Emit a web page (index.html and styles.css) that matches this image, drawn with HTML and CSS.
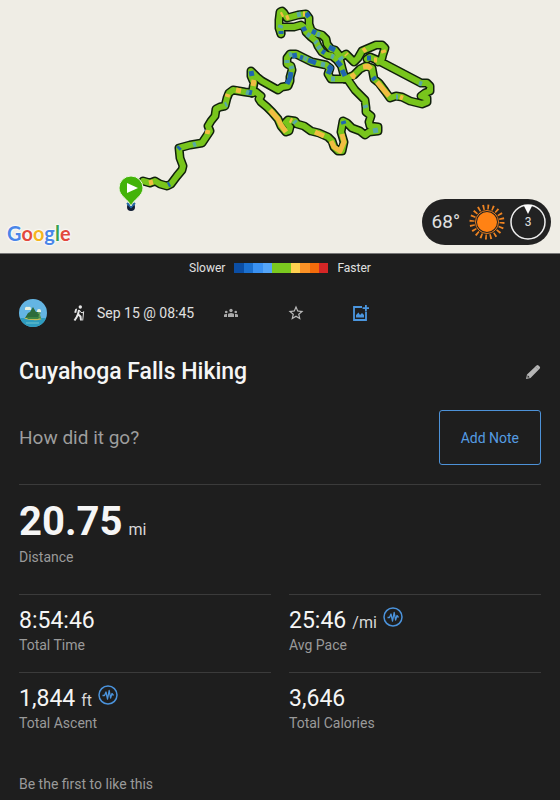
FILE: index.html
```html
<!DOCTYPE html>
<html lang="en">
<head>
    <meta charset="UTF-8">
    <meta name="viewport" content="width=device-width, initial-scale=1.0">
    <title>Cuyahoga Falls Hiking</title>
    <link rel="stylesheet" href="styles.css">
</head>
<body>
    <div class="map">
        <svg class="map-canvas" viewBox="0 0 560 253" role="img" aria-label="Route map">
            <defs>
                <g id="route">
                    <path d="M143 181L150 183L155 181L160 184L167 186L171 184L177 176L182 170L183 166L180 158L179 148L190 145L202 143L206 137L210 131L208 126L211 121L215 116L216 109L220 107L225 106L227 98L229 93L233 90L245 92L252 93"/>
                    <path d="M252 93L254 83L251 76L251 71L257 77L262 81L278 90L282 87L288 86L290 81L290 77L292 70L291 66L287 64L287 58L290 54L296 54L302 57L312 62L326 65L330 68L328 74L331 79L345 79"/>
                    <path d="M345 79L354 75L360 69L366 66L372 68L374 79L379 83L385 91L390 98L396 96L402 97L410 101L422 104L427 102L427 98L421 96L425 93L430 91L430 86L427 83L421 83L381 62L383 54L385 48L382 45L376 45L362 51L358 58L354 62L350 58L346 54L341 57L338 60"/>
                    <path d="M367 59L370 57L377 60L378 62"/>
                    <path d="M281 34L279 28L279 20L280 12L282 11L284 13L287 18L298 15L306 14L309 18L309 24L311 30L315 33L322 35L326 39L327 44L331 49L335 50L339 55L340 60L342 68L345 79"/>
                    <path d="M281 33L281 27L294 27L301 25L305 28L306 32L311 37L316 41L318 46L322 52L327 55L332 56L337 60L340 64"/>
                    <path d="M252 93L256 92L261 96L259 99L261 102L267 107L272 112L278 119L281 126L286 132L289 131L290 127L286 122L288 120L295 121L297 124L304 126L311 131L319 133L328 137L332 141L334 147L338 151L342 151L344 142L341 132L343 121L347 123L352 128L360 131L365 135L369 132L378 131L378 127L370 126L369 122L371 116L366 112L366 108L365 100L355 90L348 80"/>
                </g>
            </defs>
            <use href="#route" class="route route-outline"/>
            <use href="#route" class="route route-line"/>
            <g class="route pace-slow">
                <path d="M178 149L180 147M168 185L170 184M206 132L207 131M248 92L252 93M251 71L252 76M287 84L290 78L291 72M292 56L297 55M300 57L303 58M308 60L316 63M328 66L331 68L328 74M337 61L341 66M342 70L345 76M281 34L281 31M306 13L309 17M303 27L305 31M312 31L316 33M329 47L335 50M322 51L325 53M367 58L371 58M373 77L375 80M343 121L344 124"/>
            </g>
            <g class="route pace-mid">
                <path d="M193 145L196 144M225 105L227 104M246 92L249 93M280 28L281 25M297 15L301 14M289 55L292 54M291 66L292 69M304 58L307 59M321 64L325 65M331 79L335 79M317 34L320 35M307 34L310 36M315 41L317 43M331 56L334 57M318 46L320 49M340 57L342 60M365 105L366 108M373 131L378 130M294 121L296 123M396 97L398 97M419 83L422 84M287 60L287 63"/>
            </g>
            <g class="route pace-fast">
                <path d="M149 183L153 182M227 97L228 94M236 90L241 91M254 80L253 86M208 130L207 134M286 18L289 17M303 14L305 14M363 67L368 66L371 69M351 77L355 74M377 82L389 96M374 60L377 60M270 110L278 119L281 125L286 132M290 120L292 121M315 132L324 136M331 141L334 147L340 151L344 142L342 134M352 78L354 76M281 15L283 14M346 54L347 55M363 51L366 49M383 50L384 53M400 97L403 98"/>
            </g>
            <circle cx="131" cy="207" r="4" fill="#111d33"/>
            <path d="M127 203l4 4 4-4" fill="none" stroke="#2368a8" stroke-width="2"/>
            <path d="M131 206C128 199 119 196 119 188A12 12 0 0 1 143 188C143 196 134 199 131 206Z" fill="#43b309" stroke="#e9f4dc" stroke-width="1"/>
            <path d="M127 183L138 188L127 193Z" fill="#fff"/>
        </svg>
        <div class="google-logo" aria-label="Google"><span class="g-blue">G</span><span class="g-red">o</span><span class="g-yellow">o</span><span class="g-blue">g</span><span class="g-green">l</span><span class="g-red">e</span></div>
        <div class="weather">
            <span class="temperature">68°</span>
            <svg class="weather-icon" viewBox="0 0 36 36" aria-hidden="true">
                <circle cx="18" cy="18" r="15" fill="none" stroke="#ef8422" stroke-width="5" stroke-dasharray="1.7 3.01"/>
                <circle cx="18" cy="18" r="11.5" fill="#222" stroke="#e87c1e" stroke-width="1"/>
                <circle cx="18" cy="18" r="10" fill="#ff8214"/>
            </svg>
            <div class="wind">
                <svg class="wind-dial" viewBox="0 0 36 36" aria-hidden="true">
                    <circle cx="18" cy="18" r="17" fill="none" stroke="#eee" stroke-width="1.5"/>
                    <path d="M13.5 1H22.5L18 10Z" fill="#fff"/>
                </svg>
                <span class="wind-speed">3</span>
            </div>
        </div>
    </div>

    <div class="legend">
        <span>Slower</span>
        <div class="legend-bar">
            <i class="step-1"></i><i class="step-2"></i><i class="step-3"></i><i class="step-4"></i><i class="step-5"></i><i class="step-5"></i><i class="step-6"></i><i class="step-7"></i><i class="step-8"></i><i class="step-9"></i>
        </div>
        <span>Faster</span>
    </div>

    <main class="activity">
        <div class="meta">
            <svg class="avatar" viewBox="0 0 28 28" role="img" aria-label="Profile">
                <clipPath id="avatar-clip"><circle cx="14" cy="14" r="14"/></clipPath>
                <g clip-path="url(#avatar-clip)">
                    <path d="M0 0H28V28H0Z" fill="#64b5e3"/>
                    <path d="M0 19H28V28H0Z" fill="#2e9cbf"/>
                    <path d="M6 10a2 2 0 0 1 3-2a2 2 0 0 1 3 2v1H6zM18 12a2 2 0 0 1 4 0v1h-4z" fill="#e9f1df"/>
                    <path d="M6 19L9 14L11 13L14 8L17 13L19 13L22 19Z" fill="#2d6b3b"/>
                    <path d="M19 20L20 15L18 14L20 13L22 14L21 15L22 20Z" fill="#5e9b52"/>
                    <path d="M5 19Q14 18 23 20Q18 22 14 21Q8 21 5 19Z" fill="#c7ba55"/>
                    <path d="M7 18H21L19 20H9Z" fill="#3c8442"/>
                    <path d="M7 24H20" stroke="#71c5ce"/>
                </g>
            </svg>
            <svg class="hiker" viewBox="0 0 12 18" aria-hidden="true">
                <circle cx="7.3" cy="3" r="1.7" fill="#e5e5e5"/>
                <path d="M2.3 5L4.2 4.6L3.2 9L1.2 8.4Z" fill="#e5e5e5"/>
                <path d="M6 6L5 10.3L7.5 12.5L8 16.5M5 10.3L3.6 13.2L1.5 16.5" fill="none" stroke="#e5e5e5" stroke-width="2"/>
                <path d="M6.3 6L8 8.5L10.5 8.7M10.7 7.3L9.7 16.5" fill="none" stroke="#e5e5e5"/>
            </svg>
            <time datetime="09-15T08:45">Sep 15 @ 08:45</time>
            <button type="button" class="icon-btn group-btn" aria-label="Visible to everyone">
                <svg viewBox="0 0 28 20" width="14" height="10" fill="#aaa">
                    <circle cx="14" cy="5" r="3.4"/>
                    <circle cx="4.5" cy="8" r="2.6"/>
                    <circle cx="23.5" cy="8" r="2.6"/>
                    <path d="M8 18V13Q8 10 14 10T20 13V18ZM0 18V14Q0 11.5 6 12V18ZM22 18V12Q28 11.5 28 14V18Z"/>
                </svg>
            </button>
            <button type="button" class="icon-btn star-btn" aria-label="Favorite">
                <svg viewBox="0 0 24 24" width="18" height="18" fill="#bbb">
                    <path d="M22 9.24l-7.19-.62L12 2 9.19 8.63 2 9.24l5.46 4.73L5.82 21 12 17.27 18.18 21l-1.63-7.03L22 9.24zM12 15.4l-3.76 2.27 1-4.28-3.32-2.88 4.38-.38L12 6.1l1.71 4.04 4.38.38-3.32 2.88 1 4.28L12 15.4z"/>
                </svg>
            </button>
            <button type="button" class="icon-btn photo-btn" aria-label="Add photo">
                <svg viewBox="0 0 16 16" width="16" height="16">
                    <path d="M9 2H1V15H13V7" fill="none" stroke="#4b96df" stroke-width="1.8"/>
                    <path d="M3 12.5V10L5.5 7.5L7 10L9 8L11 10V12.5ZM12 0H13.8V2.3H16V4.1H13.8V6.4H12V4.1H9.6V2.3H12Z" fill="#4b96df"/>
                </svg>
            </button>
        </div>

        <div class="title-row">
            <h1>Cuyahoga Falls Hiking</h1>
            <button type="button" class="icon-btn edit-btn" aria-label="Edit title">
                <svg viewBox="0 0 16 16" width="16" height="16">
                    <path d="M1 15L2 10.5L11.5 1.5Q12.5.5 13.5 1.5L14.8 2.8Q15.6 3.8 14.6 4.8L5.5 14Z" fill="#b5b5b5"/>
                    <path d="M2.7 11.3L4.7 13.3L2.5 13.7Z" fill="#1e1e1e"/>
                    <path d="M10.5 2.6L13.5 5.7" stroke="#888" stroke-width=".6"/>
                </svg>
            </button>
        </div>

        <div class="note-row">
            <p>How did it go?</p>
            <button type="button" class="note-btn">Add Note</button>
        </div>

        <div class="stats">
            <div class="stat stat-main">
                <div class="value">20.75 <span class="unit">mi</span></div>
                <div class="label">Distance</div>
            </div>
            <div class="stat">
                <div class="value">8:54:46</div>
                <div class="label">Total Time</div>
            </div>
            <div class="stat">
                <div class="value">25:46 <span class="unit">/mi</span>
                    <button type="button" class="icon-btn chart-btn" aria-label="Pace chart">
                        <svg viewBox="0 0 20 20" width="20" height="20" fill="none" stroke="#4b93dc">
                            <circle cx="10" cy="10" r="9" stroke-width="1.5"/>
                            <path d="M4.5 10.5H6.5L8 7L9.5 14L11.2 5.5L12.6 13L14 8.5L15.5 10.5" stroke-width="1.3" stroke-linejoin="round"/>
                        </svg>
                    </button>
                </div>
                <div class="label">Avg Pace</div>
            </div>
            <div class="stat">
                <div class="value">1,844 <span class="unit">ft</span>
                    <button type="button" class="icon-btn chart-btn" aria-label="Ascent chart">
                        <svg viewBox="0 0 20 20" width="20" height="20" fill="none" stroke="#4b93dc">
                            <circle cx="10" cy="10" r="9" stroke-width="1.5"/>
                            <path d="M4.5 10.5H6.5L8 7L9.5 14L11.2 5.5L12.6 13L14 8.5L15.5 10.5" stroke-width="1.3" stroke-linejoin="round"/>
                        </svg>
                    </button>
                </div>
                <div class="label">Total Ascent</div>
            </div>
            <div class="stat">
                <div class="value">3,646</div>
                <div class="label">Total Calories</div>
            </div>
        </div>

        <p class="likes">Be the first to like this</p>
    </main>
</body>
</html>
```
FILE: styles.css
```css
* {
    margin: 0;
    padding: 0;
    box-sizing: border-box;
}

body {
    min-height: 100vh;
    background: #1e1e1e;
    color: #e0e0e0;
    font-family: Roboto, 'Liberation Sans', sans-serif;
    font-size: 14px;
    line-height: 20px;
}

button {
    font-family: inherit;
    cursor: pointer;
}

/* Map */
.map {
    position: relative;
    background: #efede5;
    border-bottom: 1px solid #777;
}

.map-canvas {
    display: block;
    width: 100%;
}

.route {
    fill: none;
    stroke-linejoin: round;
    stroke-linecap: round;
}

.route-outline {
    stroke: #10200c;
    stroke-width: 9px;
}

.route-line {
    stroke: #78c51c;
    stroke-width: 6px;
}

.pace-slow,
.pace-mid,
.pace-fast {
    stroke-width: 5px;
    stroke-linecap: butt;
}

.pace-slow {
    stroke: #1f66b0;
}

.pace-mid {
    stroke: #58a9a5;
}

.pace-fast {
    stroke: #f2bd42;
}

.google-logo {
    position: absolute;
    left: 7px;
    bottom: 8px;
    font-family: Lato, sans-serif;
    font-size: 20px;
    font-weight: 700;
    line-height: 24px;
    text-shadow: 0 0 2px #fff, 0 0 2px #fff, 0 0 3px #fff;
}

.g-blue {
    color: #4a86e8;
}

.g-red {
    color: #e2493d;
}

.g-yellow {
    color: #f5b51f;
}

.g-green {
    color: #38a350;
}

.weather {
    position: absolute;
    right: 9px;
    bottom: 8px;
    display: flex;
    align-items: center;
    gap: 5px;
    height: 46px;
    padding: 0 5px 0 10px;
    border-radius: 23px;
    background: #222;
}

.temperature {
    margin-right: 4px;
    font-size: 19px;
}

.weather-icon,
.wind {
    width: 36px;
    height: 36px;
}

.wind {
    display: grid;
    place-items: center;
}

.wind-dial,
.wind-speed {
    grid-area: 1 / 1;
}

.wind-speed {
    font-size: 12px;
}

/* Pace legend */
.legend {
    display: flex;
    justify-content: center;
    align-items: center;
    gap: 9px;
    padding-top: 4px;
    font-size: 12px;
}

.legend-bar {
    display: flex;
    width: 94px;
    height: 10px;
}

.legend-bar i {
    flex: 1;
}

.step-1 {
    background: #0b4ea5;
}

.step-2 {
    background: #1b70d0;
}

.step-3 {
    background: #3a91f2;
}

.step-4 {
    background: #55a5f8;
}

.step-5 {
    background: #7bc91f;
}

.step-6 {
    background: #ffd04f;
}

.step-7 {
    background: #fb9126;
}

.step-8 {
    background: #f36b0b;
}

.step-9 {
    background: #d52626;
}

/* Activity details */
.activity {
    padding: 0 19px 5px;
}

.meta {
    display: flex;
    align-items: center;
    height: 28px;
    margin-top: 21px;
}

.avatar {
    width: 28px;
    height: 28px;
}

.hiker {
    width: 12px;
    height: 18px;
    margin: 0 12px 0 26px;
}

.icon-btn {
    display: inline-flex;
    border: none;
    background: none;
}

.group-btn {
    margin-left: 30px;
}

.star-btn {
    margin-left: 49px;
}

.photo-btn {
    margin-left: 48px;
}

.title-row {
    display: flex;
    align-items: center;
    justify-content: space-between;
    margin-top: 31px;
}

h1 {
    color: #f5f5f5;
    font-size: 23px;
    font-weight: 500;
    line-height: 28px;
}

.note-row {
    display: flex;
    align-items: center;
    justify-content: space-between;
    margin-top: 24px;
    padding-bottom: 19px;
}

.note-row p {
    color: #9d9d9d;
    font-size: 19px;
}

.note-btn {
    height: 55px;
    padding: 0 21px;
    border: 1px solid #4d92d8;
    border-radius: 3px;
    background: none;
    color: #559ce2;
    font-size: 14px;
}

.stats {
    display: grid;
    grid-template-columns: 1fr 1fr;
    column-gap: 18px;
}

.stat {
    height: 78px;
    padding-top: 12px;
    border-top: 1px solid #3b3b3b;
}

.stat-main {
    grid-column: 1 / -1;
    height: 110px;
}

.value {
    display: flex;
    align-items: baseline;
    gap: 6px;
    height: 28px;
    color: #f5f5f5;
    font-size: 23px;
    line-height: 28px;
    white-space: nowrap;
}

.stat-main .value {
    height: 50px;
    font-size: 40px;
    font-weight: 700;
    line-height: 50px;
}

.unit {
    color: #d8d8d8;
    font-size: 16px;
    font-weight: 400;
}

.chart-btn {
    align-self: flex-start;
}

.label {
    color: #9a9a9a;
    font-size: 14px;
    line-height: 20px;
}

.likes {
    margin-top: 24px;
    color: #9a9a9a;
}
```
